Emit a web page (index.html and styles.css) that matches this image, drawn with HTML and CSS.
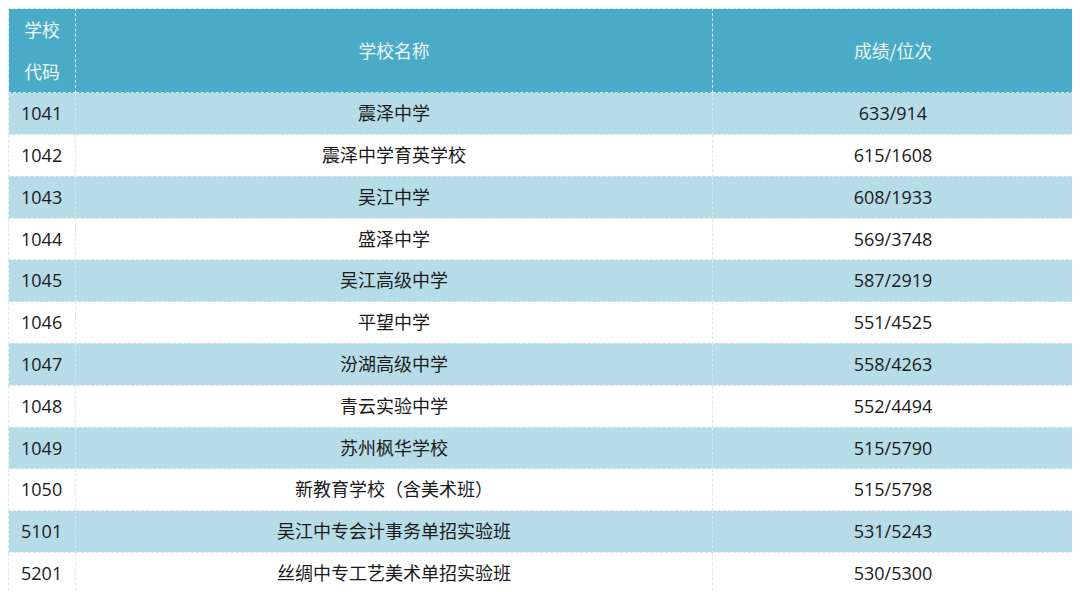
FILE: index.html
```html
<!DOCTYPE html>
<html lang="zh">
<head>
<meta charset="utf-8">
<link rel="stylesheet" href="styles.css">
</head>
<body>
<table class="score-table">
  <colgroup>
    <col class="c-code">
    <col class="c-name">
    <col class="c-score">
  </colgroup>
  <thead>
    <tr>
      <th class="code-h">学校<br>代码</th>
      <th>学校名称</th>
      <th>成绩/位次</th>
    </tr>
  </thead>
  <tbody>
    <tr class="odd"><td class="code">1041</td><td>震泽中学</td><td>633/914</td></tr>
    <tr><td class="code">1042</td><td>震泽中学育英学校</td><td>615/1608</td></tr>
    <tr class="odd"><td class="code">1043</td><td>吴江中学</td><td>608/1933</td></tr>
    <tr><td class="code">1044</td><td>盛泽中学</td><td>569/3748</td></tr>
    <tr class="odd"><td class="code">1045</td><td>吴江高级中学</td><td>587/2919</td></tr>
    <tr><td class="code">1046</td><td>平望中学</td><td>551/4525</td></tr>
    <tr class="odd"><td class="code">1047</td><td>汾湖高级中学</td><td>558/4263</td></tr>
    <tr><td class="code">1048</td><td>青云实验中学</td><td>552/4494</td></tr>
    <tr class="odd"><td class="code">1049</td><td>苏州枫华学校</td><td>515/5790</td></tr>
    <tr><td class="code">1050</td><td>新教育学校（含美术班）</td><td>515/5798</td></tr>
    <tr class="odd"><td class="code">5101</td><td>吴江中专会计事务单招实验班</td><td>531/5243</td></tr>
    <tr><td class="code">5201</td><td>丝绸中专工艺美术单招实验班</td><td>530/5300</td></tr>
  </tbody>
</table>
</body>
</html>
```

FILE: styles.css
```css
html, body {
  background: #ffffff;
}
body {
  margin: 8px;
  font-family: "Open Sans", "Noto Sans CJK SC", sans-serif;
  font-size: 18px;
  color: #1a1a1a;
}
.score-table {
  width: 1065px;
  border-collapse: collapse;
  table-layout: fixed;
}
.c-code { width: 67px; }
.c-name { width: 637px; }
.c-score { width: 361px; }
.score-table th,
.score-table td {
  border: 1px dashed #d4ebf2;
  padding: 0;
  text-align: center;
  font-weight: normal;
  line-height: 40.8px;
  white-space: nowrap;
}
.score-table th {
  background: #4aabc6;
  color: #eef7fa;
  font-family: "Noto Sans CJK SC", sans-serif;
  font-size: 17.8px;
  line-height: 41.6px;
}
.score-table td {
  font-family: "Open Sans", "Noto Sans CJK SC", sans-serif;
}
.score-table td.code {
  text-align: left;
  padding-left: 12px;
}
.score-table tr.odd td {
  background: #b6dce7;
}
```
